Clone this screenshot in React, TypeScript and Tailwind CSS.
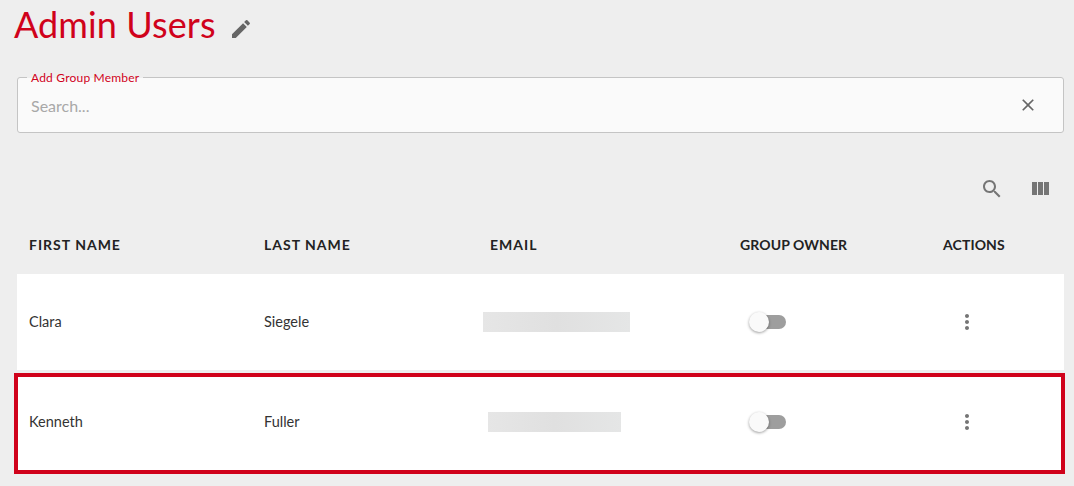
const Icon = ({ d, size = 24, cls = "" }: { d: string; size?: number; cls?: string }) => (
  <svg width={size} height={size} viewBox="0 0 24 24" className={`shrink-0 ${cls}`} fill="currentColor">
    <path d={d} />
  </svg>
);
const edit = "M3 17.25V21h3.75L17.81 9.94l-3.75-3.75L3 17.25zM20.71 7.04c.39-.39.39-1.02 0-1.41l-2.34-2.34a.9959.9959 0 0 0-1.41 0l-1.83 1.83 3.75 3.75 1.83-1.83z";
const search = "M15.5 14h-.79l-.28-.27C15.41 12.59 16 11.11 16 9.5 16 5.91 13.09 3 9.5 3S3 5.91 3 9.5 5.91 16 9.5 16c1.61 0 3.09-.59 4.23-1.57l.27.28v.79l5 4.99L20.49 19l-4.99-5zm-6 0C7.01 14 5 11.99 5 9.5S7.01 5 9.5 5 14 7.01 14 9.5 11.99 14 9.5 14z";
const cols = "M10 18h5V5h-5v13zm-6 0h5V5H4v13zM16 5v13h5V5h-5z";
const close = "M19 6.41L17.59 5 12 10.59 6.41 5 5 6.41 10.59 12 5 17.59 6.41 19 12 13.41 17.59 19 19 17.59 13.41 12z";
const more = "M12 8c1.1 0 2-.9 2-2s-.9-2-2-2-2 .9-2 2 .9 2 2 2zm0 2c-1.1 0-2 .9-2 2s.9 2 2 2 2-.9 2-2-.9-2-2-2zm0 6c-1.1 0-2 .9-2 2s.9 2 2 2 2-.9 2-2-.9-2-2-2z";

const grid = "grid grid-cols-[235px_226px_250px_203px_1fr] items-center";

const Toggle = () => (
  <div className="relative ml-[12px] h-[14px] w-[34px] rounded-full bg-[#9e9e9e]">
    <div className="absolute left-[-3px] top-[-3px] h-[20px] w-[20px] rounded-full bg-[#fafafa] shadow-[0_1px_3px_rgba(0,0,0,0.4)]" />
  </div>
);

const Row = ({ first, last, blurCls, rowCls }: { first: string; last: string; blurCls: string; rowCls: string }) => (
  <div className={`${grid} h-full text-[14.5px] text-[#333333] ${rowCls}`}>
    <div className="mt-[-1px]">{first}</div>
    <div className="mt-[-1px]">{last}</div>
    <div className={`h-[20px] bg-gradient-to-r from-[#e6e6e6] via-[#e0e0e0] to-[#e5e6e6] ${blurCls}`} />
    <div><Toggle /></div>
    <div className="pl-[12px] text-[#757575]"><Icon d={more} /></div>
  </div>
);

export default function App() {
  return (
    <div className="h-[486px] w-[1074px] overflow-hidden bg-[#eeeeee] font-['Lato','Liberation_Sans',sans-serif]">
      <div className="flex h-[50px] items-center pl-[14px]">
        <h1 className="mt-[-2px] text-[36px] font-normal leading-[43px] tracking-[0.1px] text-[#d0021b]">Admin Users</h1>
        <Icon d={edit} cls="ml-[13px] mt-[8px] text-[#666666]" />
      </div>

      <div className="relative ml-[17px] mr-[10px] mt-[27px] flex h-[56px] items-center justify-between rounded-[3px] border border-[#c4c4c4] bg-[#fafafa] pl-[13px] pr-[25px]">
        <span className="absolute left-[9px] top-[-7px] px-[4px] text-[12px] leading-[14px] tracking-[0.2px] text-[#d0021b] [background:linear-gradient(#eeeeee_50%,#fafafa_50%)]">Add Group Member</span>
        <span className="mt-[1px] text-[16px] text-[#a8a8a8]">Search...</span>
        <Icon d={close} size={20} cls="text-[#666666]" />
      </div>

      <div className="mt-[44px] flex h-[24px] justify-end gap-[24px] pr-[22px] text-[#757575]">
        <Icon d={search} />
        <Icon d={cols} />
      </div>

      <div className={`${grid} ml-[17px] mr-[10px] mt-[20px] h-[53px] pb-[6px] pl-3 text-[14px] font-bold tracking-[1px] text-[#222222]`}>
        <div>FIRST NAME</div>
        <div>LAST NAME</div>
        <div>EMAIL</div>
        <div className="tracking-[0.1px]">GROUP OWNER</div>
        <div className="tracking-[0.1px]">ACTIONS</div>
      </div>

      <div className="ml-[17px] mr-[10px] h-[96px] bg-white">
        <Row first="Clara" last="Siegele" rowCls="pl-3" blurCls="ml-[-7px] w-[147px]" />
      </div>

      <div className="ml-[14px] mr-[9px] mt-[3px] h-[101px] border-[4px] border-[#d0021b] bg-white">
        <Row first="Kenneth" last="Fuller" rowCls="pb-[3px] pl-[11px]" blurCls="ml-[-2px] w-[133px]" />
      </div>
    </div>
  );
}
